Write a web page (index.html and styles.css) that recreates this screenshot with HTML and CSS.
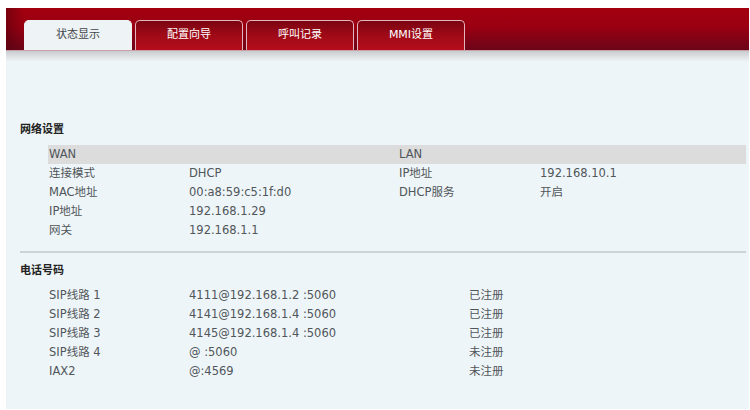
FILE: index.html
```html
<!DOCTYPE html>
<html lang="zh-CN">
<head>
    <meta charset="UTF-8">
    <title>状态显示</title>
    <link rel="stylesheet" href="styles.css">
</head>
<body>
    <div class="page">
        <div class="header">
            <ul class="tabs">
                <li class="tab active">状态显示</li>
                <li class="tab">配置向导</li>
                <li class="tab">呼叫记录</li>
                <li class="tab">MMI设置</li>
            </ul>
        </div>

        <div class="content">
            <h3 class="section-title">网络设置</h3>
            <div class="info net">
                <div class="row head">
                    <span>WAN</span><span></span><span>LAN</span><span></span>
                </div>
                <div class="row">
                    <span>连接模式</span><span>DHCP</span><span>IP地址</span><span>192.168.10.1</span>
                </div>
                <div class="row">
                    <span>MAC地址</span><span>00:a8:59:c5:1f:d0</span><span>DHCP服务</span><span>开启</span>
                </div>
                <div class="row">
                    <span>IP地址</span><span>192.168.1.29</span><span></span><span></span>
                </div>
                <div class="row">
                    <span>网关</span><span>192.168.1.1</span><span></span><span></span>
                </div>
            </div>

            <hr class="divider">

            <h3 class="section-title">电话号码</h3>
            <div class="info phone">
                <div class="row"><span>SIP线路 1</span><span>4111@192.168.1.2 :5060</span><span>已注册</span></div>
                <div class="row"><span>SIP线路 2</span><span>4141@192.168.1.4 :5060</span><span>已注册</span></div>
                <div class="row"><span>SIP线路 3</span><span>4145@192.168.1.4 :5060</span><span>已注册</span></div>
                <div class="row"><span>SIP线路 4</span><span>@ :5060</span><span>未注册</span></div>
                <div class="row"><span>IAX2</span><span>@:4569</span><span>未注册</span></div>
            </div>
        </div>
    </div>
</body>
</html>
```

FILE: styles.css
```css
body {
    margin: 0;
    background: #ffffff;
    font-family: "DejaVu Sans", "Noto Sans CJK SC", sans-serif;
    font-size: 11.5px;
    color: #50565a;
}

.page {
    margin: 8px 1px 0 6px;
    background: #eef5f8;
}

/* top bar with tabs */
.header {
    height: 43px;
    display: flex;
    align-items: flex-end;
    padding-left: 18px;
    background:
        linear-gradient(to right, rgba(70, 0, 10, 0.45) 0, rgba(70, 0, 10, 0) 18px),
        linear-gradient(to bottom, #a3000f 0%, #9a0012 45%, #6c0519 100%);
    border-bottom: 1px solid #c9a0a8;
    box-sizing: border-box;
}

.tabs {
    list-style: none;
    margin: 0;
    padding: 0;
    display: flex;
    gap: 3px;
}

.tab {
    width: 106px;
    height: 29px;
    line-height: 28px;
    text-align: center;
    font-size: 11px;
    color: #ffffff;
    border: 1px solid #e3b5bc;
    border-bottom: none;
    border-radius: 5px 5px 0 0;
    background: linear-gradient(to bottom, #7c0412 0%, #a00a17 50%, #b40d1b 100%);
}

.tab.active {
    background: #eef3f6;
    border-color: #eef3f6;
    color: #3f4548;
}

.content {
    padding: 69px 3px 28px 14px;
    background: linear-gradient(to bottom, #c9cccf 0px, #dfe3e6 6px, #eef5f8 11px);
}

.section-title {
    margin: 0;
    font-size: 11px;
    font-weight: bold;
    line-height: 19px;
    color: #222;
}

.info {
    margin-top: 6px;
    margin-left: 28px;
}

.row {
    display: grid;
    height: 19px;
    line-height: 19px;
    padding-left: 1px;
}

.net .row {
    grid-template-columns: 140px 210px 141px 1fr;
}

.phone .row {
    grid-template-columns: 140px 280px 1fr;
}

.row.head {
    background: #dcdcdc;
}

.divider {
    margin: 11px 0 8px 0;
    border: none;
    height: 2px;
    background: #cdd4d8;
}
```
